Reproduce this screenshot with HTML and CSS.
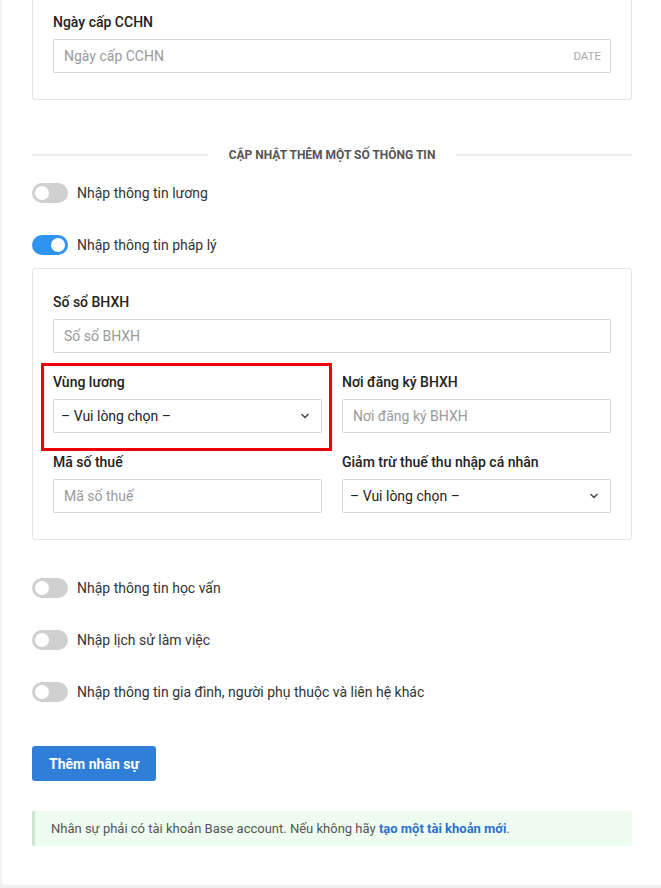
FILE: index.html
```html
<!DOCTYPE html>
<html lang="vi">
<head>
<meta charset="utf-8">
<link rel="stylesheet" href="styles.css">
</head>
<body>
<div class="page">
  <div class="box box--clipped">
    <div class="field">
      <div class="label">Ngày cấp CCHN</div>
      <div class="input">
        <span class="ph">Ngày cấp CCHN</span>
        <span class="suffix">DATE</span>
      </div>
    </div>
  </div>

  <div class="divider">
    <span class="line"></span>
    <span class="divider-text">CẬP NHẬT THÊM MỘT SỐ THÔNG TIN</span>
    <span class="line"></span>
  </div>

  <div class="toggles">
    <div class="toggle-row"><span class="switch"><span class="knob"></span></span><span class="toggle-label">Nhập thông tin lương</span></div>
    <div class="toggle-row"><span class="switch switch--on"><span class="knob"></span></span><span class="toggle-label">Nhập thông tin pháp lý</span></div>
  </div>

  <div class="box box--legal">
    <div class="field">
      <div class="label">Số sổ BHXH</div>
      <div class="input"><span class="ph">Số sổ BHXH</span></div>
    </div>
    <div class="grid">
      <div class="field field--marked">
        <div class="label">Vùng lương</div>
        <div class="input select"><span class="val">– Vui lòng chọn –</span>
          <svg class="chev" width="10" height="6" viewBox="0 0 10 6"><polyline points="1.5,1 5,4.5 8.5,1" fill="none" stroke="#444" stroke-width="1.4"/></svg>
        </div>
        <span class="mark"></span>
      </div>
      <div class="field">
        <div class="label">Nơi đăng ký BHXH</div>
        <div class="input"><span class="ph">Nơi đăng ký BHXH</span></div>
      </div>
      <div class="field">
        <div class="label">Mã số thuế</div>
        <div class="input"><span class="ph">Mã số thuế</span></div>
      </div>
      <div class="field">
        <div class="label">Giảm trừ thuế thu nhập cá nhân</div>
        <div class="input select"><span class="val">– Vui lòng chọn –</span>
          <svg class="chev" width="10" height="6" viewBox="0 0 10 6"><polyline points="1.5,1 5,4.5 8.5,1" fill="none" stroke="#444" stroke-width="1.4"/></svg>
        </div>
      </div>
    </div>
  </div>

  <div class="toggles toggles--lower">
    <div class="toggle-row"><span class="switch"><span class="knob"></span></span><span class="toggle-label">Nhập thông tin học vấn</span></div>
    <div class="toggle-row"><span class="switch"><span class="knob"></span></span><span class="toggle-label">Nhập lịch sử làm việc</span></div>
    <div class="toggle-row"><span class="switch"><span class="knob"></span></span><span class="toggle-label">Nhập thông tin gia đình, người phụ thuộc và liên hệ khác</span></div>
  </div>

  <button class="btn">Thêm nhân sự</button>

  <div class="alert">Nhân sự phải có tài khoản Base account. Nếu không hãy <a class="link">tạo một tài khoản mới</a>.</div>
</div>
</body>
</html>
```

FILE: styles.css
```css
* { box-sizing: border-box; }
html, body { margin: 0; padding: 0; }
body {
  background: #f1f1f1;
  font-family: Roboto, "Liberation Sans", Arial, sans-serif;
  font-size: 14px;
  color: #222;
  height: 888px;
  overflow: hidden;
}
.page {
  margin-left: 2px;
  width: 659px;
  height: 885px;
  background: #fff;
  border-bottom-left-radius: 4px;
  padding: 0 29px 0 30px;
  display: flex;
  flex-direction: column;
}
.box {
  border: 1px solid #e3e3e3;
  border-radius: 3px;
  padding: 23px 20px 25px;
}
.box--clipped {
  border-top: 0;
  border-radius: 0 0 3px 3px;
  padding-top: 12px;
  height: 100px;
}
.field { position: relative; }
.label {
  font-weight: 500;
  font-size: 14px;
  line-height: 20px;
  color: #222;
  margin-bottom: 7px;
}
.input {
  height: 34px;
  border: 1px solid #d6d6d6;
  border-radius: 2px;
  display: flex;
  align-items: center;
  justify-content: space-between;
  padding: 0 9px 0 10px;
  background: #fff;
}
.ph { color: #9a9a9a; font-size: 14px; }
.suffix { color: #aaa; font-size: 11.5px; }
.select { padding: 0 11px 0 7px; }
.val { color: #222; font-size: 14px; }
.chev { display: block; }
.box--legal .field + .grid { margin-top: 19px; }
.grid {
  display: grid;
  grid-template-columns: 1fr 1fr;
  column-gap: 20px;
  row-gap: 19px;
}
.mark {
  position: absolute;
  left: -12px;
  top: -9px;
  width: 291px;
  height: 88px;
  border: 3px solid #f2000a;
  pointer-events: none;
}
.divider {
  margin-top: 47px;
  display: flex;
  align-items: center;
  gap: 21px;
  height: 16px;
}
.line { flex: 1; height: 2px; background: #ececec; }
.divider-text {
  font-size: 12px;
  font-weight: 700;
  color: #555;
  white-space: nowrap;
}
.toggles {
  margin-top: 20px;
  display: flex;
  flex-direction: column;
  gap: 32px;
}
.toggles--lower { margin-top: 38px; }
.box--legal { margin-top: 13px; height: 272px; }
.toggle-row {
  display: flex;
  align-items: center;
  height: 20px;
  gap: 9px;
}
.switch {
  width: 36px;
  height: 20px;
  border-radius: 10px;
  background: #d0d0d0;
  display: flex;
  align-items: center;
  padding: 0 3px;
  flex: none;
}
.knob {
  width: 14px;
  height: 14px;
  border-radius: 50%;
  background: #fff;
}
.switch--on { background: #2f93f0; justify-content: flex-end; }
.toggle-label { font-size: 14px; color: #333; }
.btn {
  margin-top: 44px;
  align-self: flex-start;
  width: 124px;
  height: 35px;
  border: 0;
  border-radius: 3px;
  background: #2f7ed8;
  color: #fff;
  font-family: Roboto, "Liberation Sans", Arial, sans-serif;
  font-weight: 700;
  font-size: 14px;
  padding: 0;
}
.alert {
  margin-top: 30px;
  height: 35px;
  display: flex;
  align-items: center;
  background: #effdf0;
  border-left: 3px solid #cde6cf;
  border-radius: 2px;
  padding-left: 16px;
  font-size: 13px;
  color: #555;
  white-space: pre;
}
.link { color: #2d6fcb; font-weight: 700; text-decoration: none; }
```
